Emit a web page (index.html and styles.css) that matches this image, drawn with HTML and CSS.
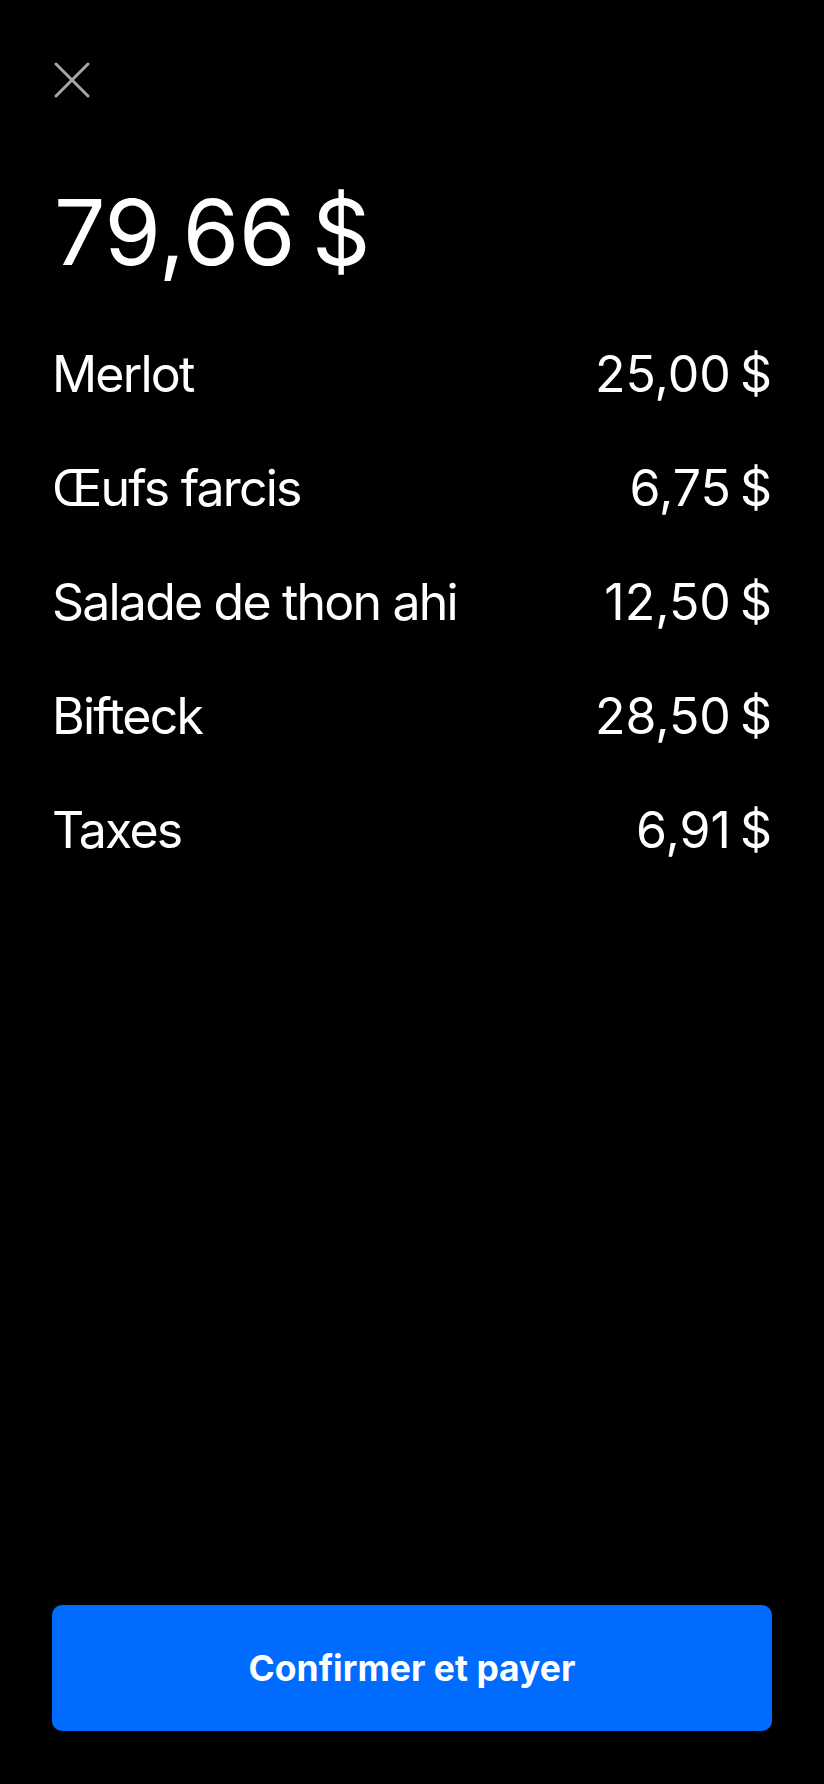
FILE: index.html
```html
<!DOCTYPE html>
<html lang="fr">
<head>
    <meta charset="UTF-8">
    <meta name="viewport" content="width=device-width, initial-scale=1.0">
    <title>Confirmer et payer</title>
    <link rel="stylesheet" href="styles.css">
</head>
<body>
    <div class="sheet">
        <button class="close-btn" aria-label="Fermer">
            <svg width="36" height="36" viewBox="0 0 36 36">
                <path d="M2 2 L34 34 M34 2 L2 34" stroke="#a3a7ab" stroke-width="3" stroke-linecap="round" fill="none"/>
            </svg>
        </button>

        <h1 class="total">79,66&#8239;$</h1>

        <ul class="items">
            <li class="item"><span>Merlot</span><span>25,00&#8239;$</span></li>
            <li class="item"><span>Œufs farcis</span><span>6,75&#8239;$</span></li>
            <li class="item"><span>Salade de thon ahi</span><span>12,50&#8239;$</span></li>
            <li class="item"><span>Bifteck</span><span>28,50&#8239;$</span></li>
            <li class="item"><span>Taxes</span><span>6,91&#8239;$</span></li>
        </ul>

        <button class="pay-btn">Confirmer et payer</button>
    </div>
</body>
</html>
```

FILE: styles.css
```css
:root {
    --background-color: #000000;
    --text-color: #ffffff;
    --accent-color: #006bff;
    --icon-color: #a3a7ab;
}

body {
    background-color: var(--background-color);
    color: var(--text-color);
    font-family: 'Inter', 'Roboto', sans-serif;
    margin: 0;
}

.sheet {
    display: flex;
    flex-direction: column;
    min-height: 1784px;
    box-sizing: border-box;
    padding: 62px 52px 53px;
}

.close-btn {
    align-self: flex-start;
    width: 36px;
    height: 36px;
    margin-left: 2px;
    padding: 0;
    border: none;
    background: none;
    cursor: pointer;
}

.close-btn svg {
    display: block;
}

.total {
    margin: 80px 0 0 2px;
    font-size: 91px;
    font-weight: 400;
    line-height: 109px;
    letter-spacing: -2.5px;
}

.items {
    list-style: none;
    margin: 30px 0 0;
    padding: 0;
}

.item {
    display: flex;
    justify-content: space-between;
    font-size: 50px;
    line-height: 114px;
    letter-spacing: -1.8px;
}

.pay-btn {
    margin-top: auto;
    height: 126px;
    border: none;
    border-radius: 10px;
    background-color: var(--accent-color);
    color: var(--text-color);
    font-family: 'Inter', sans-serif;
    font-size: 35.5px;
    font-weight: 700;
    cursor: pointer;
}
```
